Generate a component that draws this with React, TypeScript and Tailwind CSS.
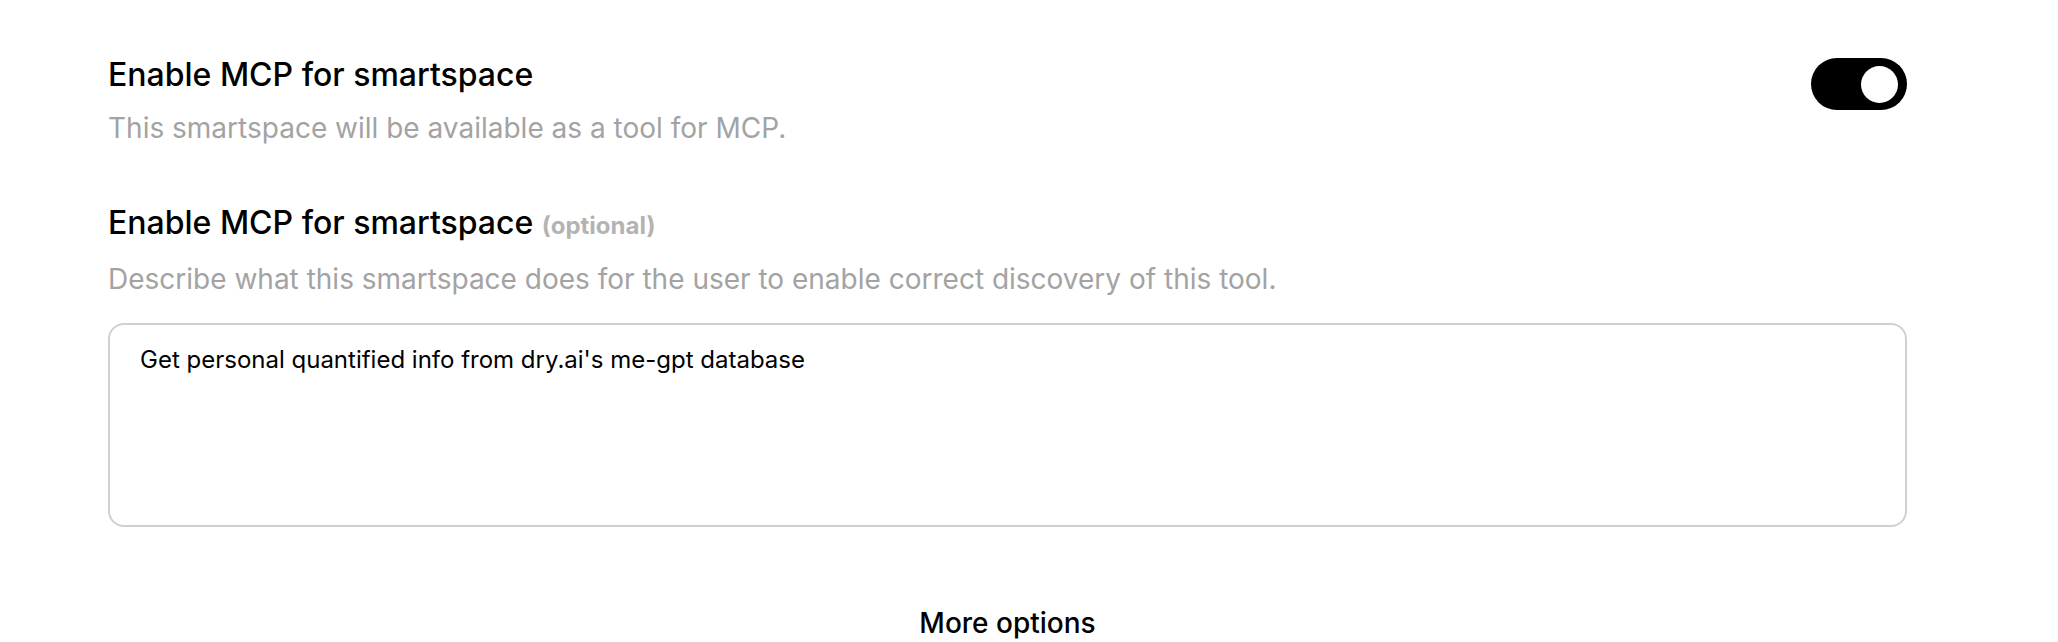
import React, { useState } from "react";

// Schalter oben rechts
function Toggle({ on, onChange }: { on: boolean; onChange: (v: boolean) => void }) {
  return (
    <button
      type="button"
      onClick={() => onChange(!on)}
      className={`flex h-[52px] w-[96px] shrink-0 items-center rounded-full px-[9px] ${
        on ? "justify-end bg-black" : "justify-start bg-[#d4d4d4]"
      }`}
    >
      <span className="block h-[37px] w-[37px] rounded-full bg-white" />
    </button>
  );
}

export default function App() {
  const [enabled, setEnabled] = useState(true);
  const [description, setDescription] = useState(
    "Get personal quantified info from dry.ai's me-gpt database"
  );

  return (
    <div className="min-h-screen bg-white font-['Inter',sans-serif] text-black">
      <div className="ml-[108px] w-[1799px] pt-[52px]">
        {/* MCP an/aus */}
        <div className="flex items-start justify-between">
          <div>
            <h2 className="text-[32px] leading-[46px] font-medium">
              Enable MCP for smartspace
            </h2>
            <p className="mt-[12px] text-[28px] leading-[36px] text-[#a3a3a3]">
              This smartspace will be available as a tool for MCP.
            </p>
          </div>
          <div className="pt-[6px]">
            <Toggle on={enabled} onChange={setEnabled} />
          </div>
        </div>

        {/* Beschreibung */}
        <div className="mt-[54px]">
          <h2 className="text-[32px] leading-[46px] font-medium">
            Enable MCP for smartspace{" "}
            <span className="text-[24px] font-bold text-[#b3b3b3]">(optional)</span>
          </h2>
          <p className="mt-[12px] text-[28px] leading-[36px] text-[#a3a3a3]">
            Describe what this smartspace does for the user to enable correct discovery of this tool.
          </p>
          <textarea
            value={description}
            onChange={(e) => setDescription(e.target.value)}
            className="mt-[26px] block h-[204px] w-full resize-none rounded-[16px] border-2 border-[#d0d0d0] px-[30px] py-[19px] text-[24px] leading-[32px] text-black outline-none"
          />
        </div>

        <div className="mt-[78px] flex justify-center">
          <button type="button" className="text-[28px] font-medium leading-[36px]">
            More options
          </button>
        </div>
      </div>
    </div>
  );
}
